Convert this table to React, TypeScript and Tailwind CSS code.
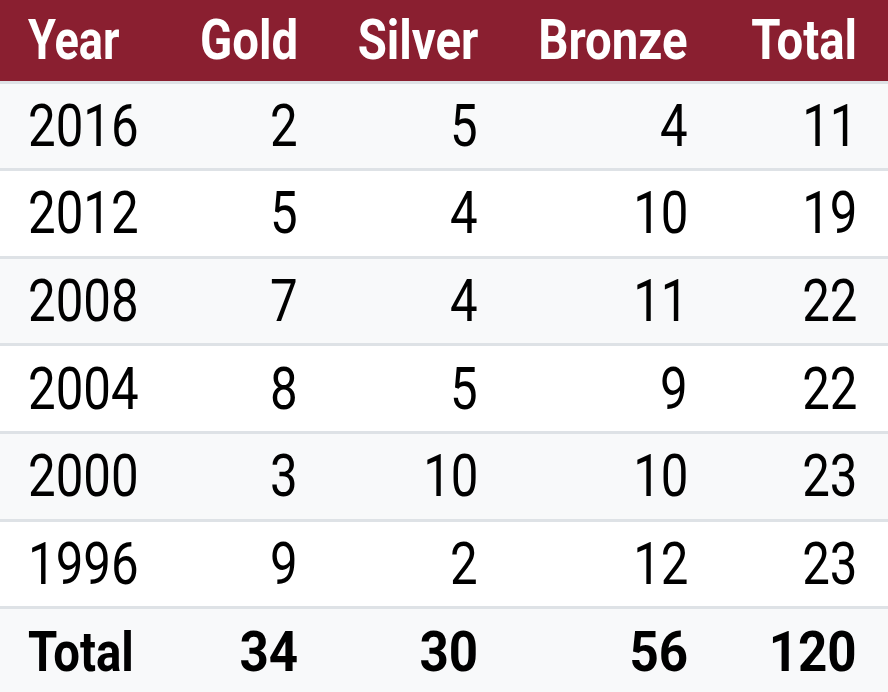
import React from "react";

const rows = [
  ["2016", "2", "5", "4", "11"],
  ["2012", "5", "4", "10", "19"],
  ["2008", "7", "4", "11", "22"],
  ["2004", "8", "5", "9", "22"],
  ["2000", "3", "10", "10", "23"],
  ["1996", "9", "2", "12", "23"],
];

const font = { fontFamily: 'Roboto, "DejaVu Sans", sans-serif' };

function S({ children, left }: { children: React.ReactNode; left?: boolean }) {
  return (
    <span className={`inline-block scale-x-[0.82] ${left ? "origin-left" : "origin-right"}`}>
      {children}
    </span>
  );
}

function H({ children }: { children: React.ReactNode }) {
  return <span className="inline-block scale-x-[0.86] origin-right">{children}</span>;
}

function B({ children }: { children: React.ReactNode }) {
  return <span className="inline-block scale-x-[0.93] origin-right">{children}</span>;
}

export default function App() {
  return (
    <div className="w-[888px] h-[692px] overflow-hidden bg-white" style={font}>
      <table className="w-[888px] border-collapse table-fixed">
        <colgroup>
          <col className="w-[176px]" />
          <col className="w-[149px]" />
          <col className="w-[180px]" />
          <col className="w-[210px]" />
          <col className="w-[173px]" />
        </colgroup>
        <thead>
          <tr className="h-[82px] bg-[#8a1f30] text-white text-[55px] font-black leading-none">
            <th className="text-left pl-[28px]"><S left>Year</S></th>
            <th className="text-right pr-[27px]"><H>Gold</H></th>
            <th className="text-right pr-[27px]"><H>Silver</H></th>
            <th className="text-right pr-[27px]"><H>Bronze</H></th>
            <th className="text-right pr-[31px]"><H>Total</H></th>
          </tr>
        </thead>
        <tbody>
          {rows.map((r, i) => (
            <tr
              key={r[0]}
              className={`h-[87.67px] border-t-[3px] border-[#dee2e6] text-[60px] font-normal leading-none text-black ${
                i % 2 === 0 ? "bg-[#f8f9fa]" : "bg-white"
              }`}
            >
              <td className="text-left pl-[28px]"><S left>{r[0]}</S></td>
              <td className="text-right pr-[27px]"><S>{r[1]}</S></td>
              <td className="text-right pr-[27px]"><S>{r[2]}</S></td>
              <td className="text-right pr-[27px]"><S>{r[3]}</S></td>
              <td className="text-right pr-[31px]"><S>{r[4]}</S></td>
            </tr>
          ))}
          <tr className="h-[88px] border-t-[3px] border-[#dee2e6] bg-[#f8f9fa] text-[55px] font-bold leading-none text-black">
            <td className="text-left pl-[28px]">
              <span className="inline-block scale-x-[0.86] origin-left">Total</span>
            </td>
            <td className="text-right pr-[27px]"><B>34</B></td>
            <td className="text-right pr-[27px]"><B>30</B></td>
            <td className="text-right pr-[27px]"><B>56</B></td>
            <td className="text-right pr-[31px]"><B>120</B></td>
          </tr>
        </tbody>
      </table>
    </div>
  );
}
